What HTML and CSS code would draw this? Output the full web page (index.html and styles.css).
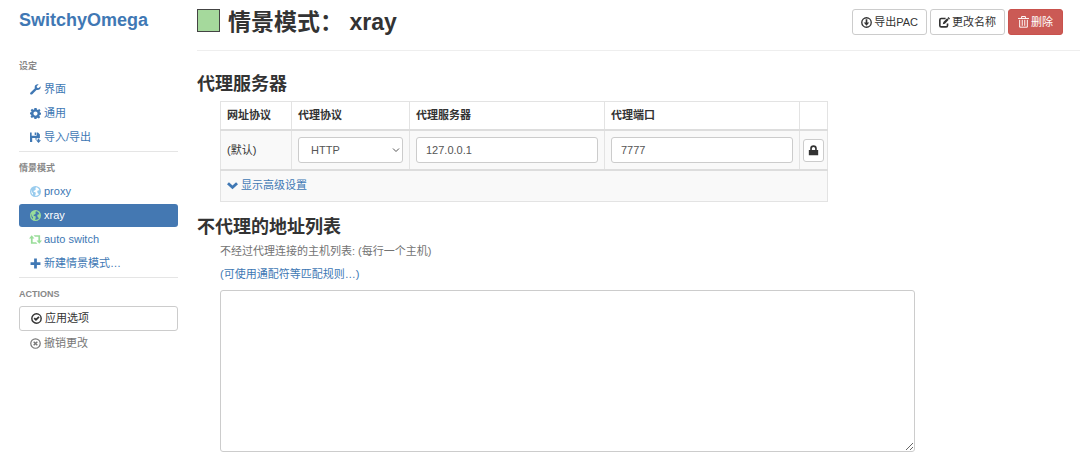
FILE: index.html
```html
<!DOCTYPE html>
<html lang="zh-CN">
<head>
<meta charset="utf-8">
<title>SwitchyOmega</title>
<link rel="stylesheet" href="styles.css">
</head>
<body>
<svg class="sprite" aria-hidden="true">
  <symbol id="wrench" viewBox="0 0 20 20"><path d="M19.3 4.2 15.8 7.4 12.7 6.8 12.2 4 15.6.7C12.600-.2 8.700 1.500 8.500 5.500c0 .9.1 1.500.4 2.100L1 15.300c-1.200 1.200-.9 2.500-.2 3.300.9.9 2.300.9 3.300-.1l7.700-7.800c4.300 1.300 8.300-1.700 7.500-6.500z"/></symbol>
  <symbol id="cog" viewBox="0 0 20 20"><path fill-rule="evenodd" d="M8 0h4l.6 2.800 1.700.7 2.400-1.600 2.400 2.400-1.600 2.400.7 1.700L20 8.500v3.500l-2.400.6-.7 1.700 1.600 2.400-2.400 2.400-2.400-1.600-1.700.7L12 20H8l-.6-2.600-1.700-.7-2.400 1.600-2.400-2.400 1.600-2.400-.7-1.700L0 11.500V8l2-.3.8-1.500L1.200 3.900l2.500-2.400 2.300 1.600 1.500-.6zM10 6.300a3.800 3.800 0 1 0 0 7.600 3.800 3.800 0 0 0 0-7.600z"/></symbol>
  <symbol id="save" viewBox="0 0 20 20"><path fill-rule="evenodd" d="M0 1h3v6h9V1h2.500L18 4.500V11h-6v3h-2v-3H4v7H0zM8.500 1H11v4.500H8.500z"/><path d="M14 12h3v3h3l-4.500 5-4.500-5h3z"/></symbol>
  <symbol id="globe" viewBox="0 0 20 20"><path fill-rule="evenodd" d="M10 0a10 10 0 1 1 0 20 10 10 0 0 1 0-20zM11 2.200 9.500 4 11 5.500 8.500 8 6 9l1.500 2 2.500.5.5 2.500-1.500 3.700C12 18.200 15 17 16.500 14.500l-2-1-1.500-3 1-2.500 3-.5C16 4.500 14 2.700 11 2.200zM3 7c-1.300 3.500-.4 7 2 9.200L5.500 13 3.500 11z"/></symbol>
  <symbol id="retweet" viewBox="0 0 24 20"><path d="M5 2l5 6H6.700v7H13l2.500 3H3.500V8H0zM8.500 2h12v10H24l-5 6-5-6h3.300V5H11z"/></symbol>
  <symbol id="plus" viewBox="0 0 20 20"><path d="M7.500 1h5v6.500H19v5h-6.500V19h-5v-6.500H1v-5h6.500z"/></symbol>
  <symbol id="ok" viewBox="0 0 20 20"><circle cx="10" cy="10" r="8.500" fill="none" stroke="currentColor" stroke-width="2.600"/><path d="M4.800 10.500 7 8.300l2 1.900 4.500-4.500L15.600 8 9 14.700z"/></symbol>
  <symbol id="remove" viewBox="0 0 20 20"><circle cx="10" cy="10" r="8.600" fill="none" stroke="currentColor" stroke-width="2.200"/><path d="m6.700 6.700 6.600 6.600m0-6.600-6.600 6.600" fill="none" stroke="currentColor" stroke-width="2.600"/></symbol>
  <symbol id="download" viewBox="0 0 20 20"><circle cx="10" cy="10" r="8.600" fill="none" stroke="currentColor" stroke-width="2.400"/><path d="M8.500 4h3v6H15l-5 5.800L5 10h3.500z"/></symbol>
  <symbol id="edit" viewBox="0 0 20 20"><path d="M12 2.800H4A2.500 2.500 0 0 0 1.500 5.300v10.200A2.500 2.500 0 0 0 4 18h9a2.500 2.500 0 0 0 2.500-2.500V12" fill="none" stroke="currentColor" stroke-width="3"/><path d="m17.200 0 2.800 2.800-1.600 1.600-2.800-2.800zM14.800 2.400l2.800 2.800-6.800 7-4 1 1.200-4z"/></symbol>
  <symbol id="trash" viewBox="0 0 20 22"><path d="M0 4.500h20M6.500 4V1h7v3M3 7v13.500h14V7M7.700 7v11M12.300 7v11" fill="none" stroke="currentColor" stroke-width="1.800"/></symbol>
  <symbol id="chevron" viewBox="0 0 20 20"><path d="M3.500 4 10 10.200 16.500 4 20 7.500 10 17 0 7.500z"/></symbol>
  <symbol id="lock" viewBox="0 0 20 20"><path fill-rule="evenodd" d="M1.500 9H4V6.500a6 6 0 0 1 12 0V9h2.500v9.500h-17zM7 9h6V6.500a3 3 0 0 0-6 0z"/></symbol>
</svg>
<div class="layout">
  <aside class="sidebar">
    <a class="brand" href="#about">SwitchyOmega</a>
    <nav>
      <ul class="nav-group">
        <li class="nav-header">设定</li>
        <li><a class="nav-link" href="#ui"><svg class="icon"><use href="#wrench"/></svg>界面</a></li>
        <li><a class="nav-link" href="#general"><svg class="icon"><use href="#cog"/></svg>通用</a></li>
        <li><a class="nav-link" href="#io"><svg class="icon"><use href="#save"/></svg>导入/导出</a></li>
      </ul>
      <ul class="nav-group">
        <li class="nav-header">情景模式</li>
        <li><a class="nav-link" href="#proxy"><svg class="icon blue"><use href="#globe"/></svg>proxy</a></li>
        <li><a class="nav-link active" href="#xray"><svg class="icon green"><use href="#globe"/></svg>xray</a></li>
        <li><a class="nav-link" href="#auto"><svg class="icon wide green"><use href="#retweet"/></svg>auto switch</a></li>
        <li><a class="nav-link" href="#new"><svg class="icon"><use href="#plus"/></svg>新建情景模式…</a></li>
      </ul>
      <ul class="nav-group">
        <li class="nav-header">ACTIONS</li>
        <li><button class="nav-link apply" type="button"><svg class="icon"><use href="#ok"/></svg>应用选项</button></li>
        <li><button class="nav-link muted" type="button"><svg class="icon"><use href="#remove"/></svg>撤销更改</button></li>
      </ul>
    </nav>
  </aside>
  <main class="main">
    <header class="page-header">
      <button class="swatch" type="button" aria-label="颜色"></button>
      <h1>情景模式： xray</h1>
      <div class="actions">
        <button class="btn" type="button"><svg class="icon"><use href="#download"/></svg>导出PAC</button>
        <button class="btn" type="button"><svg class="icon"><use href="#edit"/></svg>更改名称</button>
        <button class="btn danger" type="button"><svg class="icon tall"><use href="#trash"/></svg>删除</button>
      </div>
    </header>
    <section>
      <h2>代理服务器</h2>
      <div class="section-body">
        <table class="servers">
          <thead>
            <tr><th>网址协议</th><th>代理协议</th><th>代理服务器</th><th>代理端口</th><th></th></tr>
          </thead>
          <tbody>
            <tr>
              <td class="scheme">(默认)</td>
              <td><span class="select-wrap"><select class="control protocol" aria-label="代理协议"><option>HTTP</option></select><svg class="caret" viewBox="0 0 8 8"><path d="m1 2.500 3 3 3-3"/></svg></span></td>
              <td><input class="control" type="text" value="127.0.0.1" aria-label="代理服务器"></td>
              <td><input class="control" type="text" value="7777" aria-label="代理端口"></td>
              <td class="auth"><button class="btn lock" type="button" aria-label="认证"><svg class="icon"><use href="#lock"/></svg></button></td>
            </tr>
          </tbody>
          <tbody>
            <tr><td class="more" colspan="5"><a href="#advanced"><svg class="icon"><use href="#chevron"/></svg>显示高级设置</a></td></tr>
          </tbody>
        </table>
      </div>
    </section>
    <section>
      <h2>不代理的地址列表</h2>
      <div class="section-body">
        <label class="help" for="bypass">不经过代理连接的主机列表: (每行一个主机)</label>
        <p class="help"><a href="#patterns">(可使用通配符等匹配规则…)</a></p>
        <textarea id="bypass" class="bypass"></textarea>
      </div>
    </section>
  </main>
</div>
</body>
</html>
```
FILE: styles.css
```css
* { box-sizing: border-box; }

body {
  margin: 0;
  background: #fff;
  color: #333;
  font: 11px/15px "Liberation Sans", "Noto Sans CJK SC", sans-serif;
}

button, input, select, textarea { font: inherit; color: inherit; }
a { color: #4078b4; text-decoration: none; }
h1, h2, p, ul { margin: 0; padding: 0; }
ul { list-style: none; }

.sprite { display: none; }

.icon {
  flex: none;
  width: 11px;
  height: 11px;
  fill: currentColor;
}
.icon.wide { width: 13px; margin: 0 -1px; }
.icon.tall { height: 12px; }
.blue { color: #99ccee; }
.green { color: #99dd99; }

.layout {
  display: grid;
  grid-template-columns: 178px 1fr;
  column-gap: 19px;
}

/* Sidebar */
.sidebar { padding-left: 19px; }

.brand {
  display: block;
  padding: 8px 0 26px;
  font-size: 18px;
  line-height: 24px;
  font-weight: bold;
}

.nav-group {
  display: flex;
  flex-direction: column;
  gap: 1px;
}
.nav-group + .nav-group {
  margin-top: 2px;
  padding-top: 8px;
  border-top: 1px solid #e5e5e5;
}
.nav-header {
  padding-bottom: 3px;
  color: #888;
  font-size: 9px;
  line-height: 16px;
  font-weight: bold;
}
.nav-link {
  display: flex;
  align-items: center;
  gap: 3px;
  width: 100%;
  padding: 4px 11px;
  border: 0;
  border-radius: 3px;
  background: none;
  text-align: left;
}
.nav-link.active { background: #4478b2; color: #fff; }
.nav-link.apply { height: 25px; border: 1px solid #ccc; background: #fff; }
.nav-link.muted { color: #777; }

/* Header */
.page-header {
  display: flex;
  align-items: flex-start;
  gap: 8px;
  padding: 9px 17px 15px 0;
  border-bottom: 1px solid #eee;
}
.swatch {
  width: 23px;
  height: 23px;
  padding: 0;
  border: 1px solid #444;
  background: #a5d99c;
}
h1 { font-size: 23px; line-height: 26px; font-weight: bold; }
h2 { font-size: 18px; line-height: 22px; font-weight: bold; }

.actions { display: flex; gap: 3px; margin-left: auto; }
.btn {
  display: flex;
  align-items: center;
  gap: 2px;
  height: 26px;
  padding: 0 8px;
  border: 1px solid #ccc;
  border-radius: 3px;
  background: #fff;
}
.btn.danger {
  padding: 0 9px;
  border-color: #c9524d;
  background: #cb5a55;
  color: #fff;
}

/* Sections */
section { padding-top: 14px; }
section:first-of-type { padding-top: 22px; }
.section-body { padding: 6px 0 0 23px; }

.servers { border-collapse: collapse; background: #fff; }
.servers th, .servers td {
  padding: 6px;
  border: 1px solid #e3e3e3;
  text-align: left;
}
.servers th { height: 28px; }
.servers td { background: #f9f9f9; }
.servers tbody { border-top: 2px solid #ddd; }
.servers .scheme { min-width: 71px; }
.servers th:first-child { width: 71px; }
.servers .auth { padding: 0 3px; }
.servers .more { height: 31px; }
.more a { display: flex; align-items: center; gap: 3px; }

.control {
  display: block;
  width: 182px;
  height: 26px;
  padding: 4px 9px;
  border: 1px solid #ccc;
  border-radius: 3px;
  background: #fff;
  color: #555;
}
.select-wrap { display: grid; align-items: center; }
.select-wrap > * { grid-area: 1 / 1; }
.control.protocol { width: 105px; padding-left: 12px; appearance: none; }
.caret {
  justify-self: end;
  width: 8px;
  height: 8px;
  margin-right: 3px;
  fill: none;
  stroke: #555;
  pointer-events: none;
}
.btn.lock { height: 23px; padding: 0 4px; }

.help { display: block; padding-bottom: 8px; color: #737373; }
.bypass {
  display: block;
  width: 695px;
  max-width: 100%;
  height: 162px;
  padding: 4px 9px;
  border: 1px solid #ccc;
  border-radius: 3px;
  background: #fff;
  resize: both;
}
```
